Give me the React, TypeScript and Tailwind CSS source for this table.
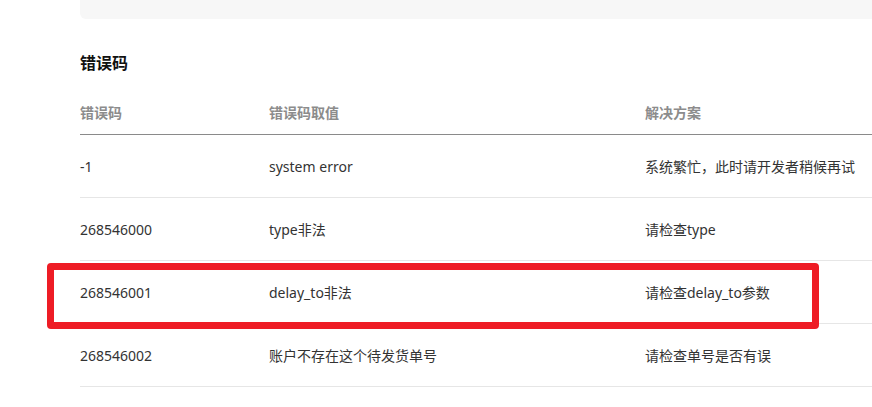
import React from 'react';

const rows = [
  { code: '-1', value: 'system error', fix: '系统繁忙，此时请开发者稍候再试' },
  { code: '268546000', value: 'type非法', fix: '请检查type' },
  { code: '268546001', value: 'delay_to非法', fix: '请检查delay_to参数', marked: true },
  { code: '268546002', value: '账户不存在这个待发货单号', fix: '请检查单号是否有误' },
];

export default function App() {
  return (
    <div
      className="w-[872px] h-[407px] overflow-hidden bg-white text-[#333]"
      style={{ fontFamily: '"Noto Sans", "Noto Sans CJK SC", sans-serif' }}
    >
      {/* previous block (cut off) */}
      <div className="ml-[80px] h-[19px] bg-[#f7f7f7] rounded-bl-md" />

      <div className="pl-[80px]">
        <h2 className="mt-[32px] text-[16px] leading-[24px] font-bold text-[#111]">错误码</h2>

        <div className="mt-[15px] w-[1000px]">
          {/* Header */}
          <div className="flex h-[45px] items-center border-b border-[#8a8a8a] text-[14px] font-semibold text-[#8c8c8c]">
            <div className="w-[189px]">错误码</div>
            <div className="w-[376px]">错误码取值</div>
            <div className="flex-1">解决方案</div>
          </div>

          {rows.map((r) => (
            <div
              key={r.code}
              className="relative flex h-[63px] items-center border-b border-[#e6e6e6] text-[14px]"
            >
              <div className="w-[189px]">{r.code}</div>
              <div className="w-[376px]">{r.value}</div>
              <div className="flex-1">{r.fix}</div>
              {r.marked && (
                <div className="absolute left-[-33px] top-[2px] h-[66px] w-[772px] rounded-[4px] border-[7px] border-[#ee1c25] pointer-events-none" />
              )}
            </div>
          ))}
        </div>
      </div>
    </div>
  );
}
